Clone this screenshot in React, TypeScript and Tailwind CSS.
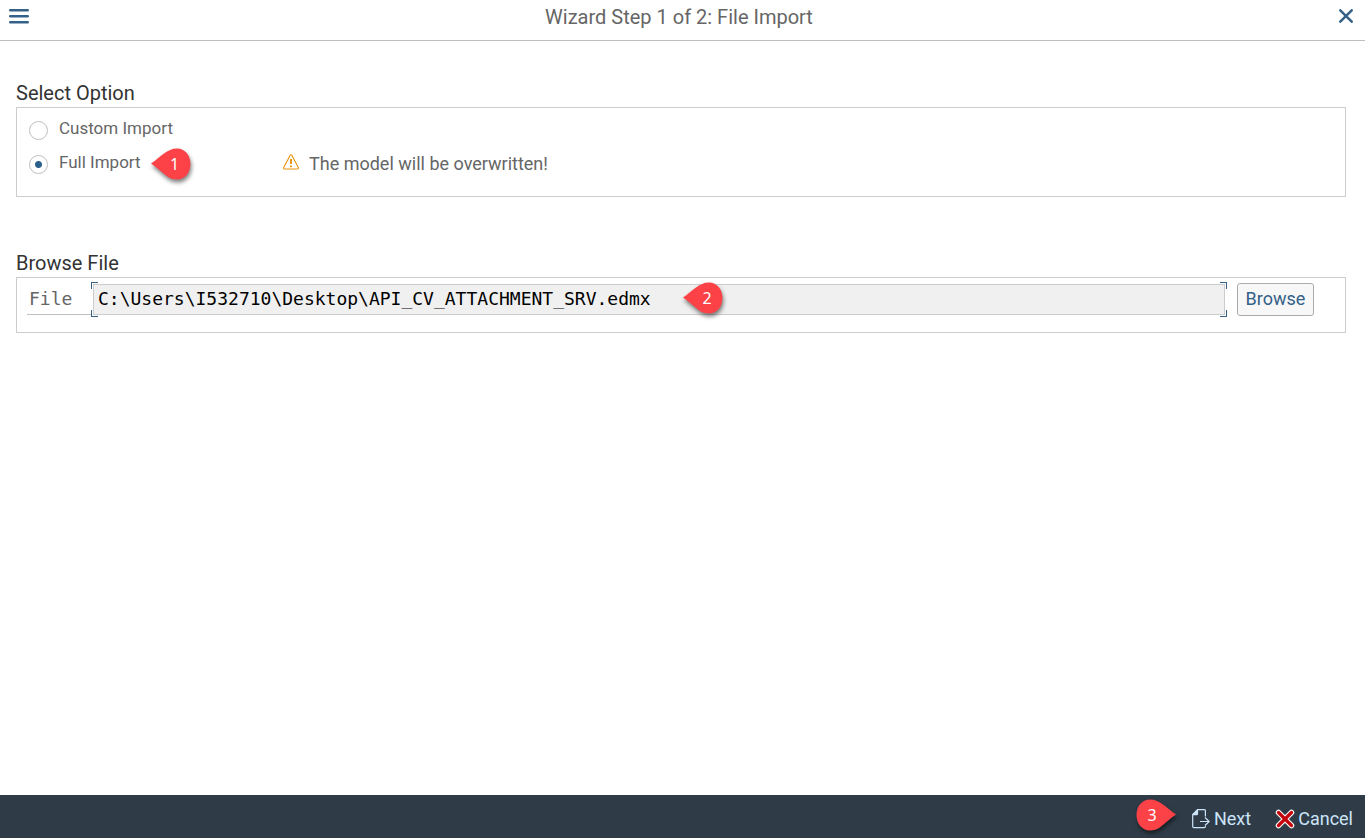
import { useState } from "react";

type MarkerProps = { label: string; direction?: "left" | "right"; className?: string };

function Marker({ label, direction = "left", className = "" }: MarkerProps) {
  const flipped = direction === "right";
  return (
    <span className={`inline-flex h-8 w-10 shrink-0 items-center ${className}`}>
      <svg
        viewBox="0 0 40 32"
        className="absolute inset-0 h-full w-full overflow-visible drop-shadow-[1px_3px_2px_rgba(0,0,0,0.5)]"
        aria-hidden="true"
      >
        <path
          fill="#fc4246"
          transform={flipped ? "matrix(-1 0 0 1 40 0)" : undefined}
          d="M0 15.5C5 12 9 8.500 13 5.500C17 2.500 21 .5 26 .5C34 .5 39.500 7.500 39.500 16C39.500 24.500 34 31.500 26 31.500C20 31.500 16 28.500 12.500 25.500C8.500 22 5 19 0 15.5Z"
        />
      </svg>
      <span
        className={`relative w-8 text-center font-['Noto_Sans',sans-serif] text-base text-white ${flipped ? "" : "ml-2"}`}
      >
        {label}
      </span>
    </span>
  );
}

function MenuIcon() {
  return (
    <svg viewBox="0 0 20 16" className="h-4 w-5" fill="none" stroke="#346187" strokeWidth="2.600" strokeLinecap="round" aria-hidden="true">
      <path d="M1.300 2.300h17.400M1.300 8.300h17.400M1.300 14.300h17.400" />
    </svg>
  );
}

function CloseIcon() {
  return (
    <svg viewBox="0 0 14 14" className="h-3.5 w-3.5" fill="none" stroke="#346187" strokeWidth="2.500" strokeLinecap="round" aria-hidden="true">
      <path d="M1.300 1.300L12.700 12.700M12.700 1.300L1.300 12.700" />
    </svg>
  );
}

function WarningIcon() {
  return (
    <svg viewBox="0 0 16 16" className="mb-1 h-4 w-4 shrink-0" fill="none" stroke="#e9930c" strokeLinejoin="round" aria-hidden="true">
      <path strokeWidth="1.1" d="M7.200 1.200Q8 .2 8.800 1.200L15.300 13.500Q15.800 15 14.600 15H1.400Q.2 15 .7 13.500Z" />
      <path strokeWidth="1.900" d="M8 5v5M8 11.500v1.700" />
    </svg>
  );
}

function NextIcon() {
  return (
    <svg viewBox="0 0 18 20" className="h-5 w-[18px]" fill="none" stroke="#cce4f8" strokeWidth="1.200" aria-hidden="true">
      <path d="M13.400 7.500V1.600Q13.400 .7 12.500 .7H5.500L.7 5.600V17.500Q.7 18.700 1.900 18.700H12.200Q13.400 18.700 13.400 17.500V17" />
      <path d="M5.500 .7V4.700Q5.500 5.600 4.600 5.600H.7" />
      <path d="M8 12.500H17M13 8.500L17.200 12.500L13 16.500" />
      <path fill="#cce4f8" stroke="none" d="M5 1V5H1Z" />
    </svg>
  );
}

function CancelIcon() {
  return (
    <svg viewBox="0 0 20 20" className="h-5 w-5" fill="none" strokeLinecap="round" aria-hidden="true">
      <path stroke="#ffffff" strokeWidth="5.500" d="M3.500 3.500L16.500 16.500M16.500 3.500L3.500 16.500" />
      <path stroke="#c5050c" strokeWidth="3.300" d="M3.500 3.500L16.500 16.500M16.500 3.500L3.500 16.500" />
    </svg>
  );
}

const radioClass =
  "h-[19px] w-[19px] shrink-0 appearance-none rounded-full border border-[#bfbfbf] bg-white checked:bg-[radial-gradient(circle,#2b5f8c_0_3px,white_4px)]";

export default function App() {
  const [mode, setMode] = useState("full");
  const [file, setFile] = useState("C:\\Users\\I532710\\Desktop\\API_CV_ATTACHMENT_SRV.edmx");

  return (
    <div className="flex min-h-screen flex-col bg-white font-[Roboto,sans-serif] text-[#666666]">
      <header className="flex h-[41px] items-start border-b border-[#bfbfbf] pr-3 pl-[9px]">
        <button type="button" aria-label="Menu" className="flex h-8 items-center">
          <MenuIcon />
        </button>
        <h1 className="flex-1 pr-2.5 text-center text-xl leading-[34px]">Wizard Step 1 of 2: File Import</h1>
        <button type="button" aria-label="Close" className="flex h-8 items-center">
          <CloseIcon />
        </button>
      </header>

      <main className="flex-1 pt-[38px] pr-[19px] pl-4">
        <section>
          <h2 className="text-xl leading-7 text-[#333333]">Select Option</h2>
          <div className="h-[90px] border border-[#cccccc] pt-[5px] pl-3">
            <label className="flex h-[34px] w-fit items-center gap-[11px] text-[17px]">
              <input type="radio" name="mode" className={radioClass} checked={mode === "custom"} onChange={() => setMode("custom")} />
              <span className="pb-0.5">Custom Import</span>
            </label>
            <div className="flex h-[34px] items-center">
              <div className="flex w-[254px] items-center gap-2.5">
                <label className="flex items-center gap-[11px] text-[17px]">
                  <input type="radio" name="mode" className={radioClass} checked={mode === "full"} onChange={() => setMode("full")} />
                  <span className="pb-0.5">Full Import</span>
                </label>
                <Marker label="1" className="relative" />
              </div>
              <p className="flex items-center gap-2.5 text-lg">
                <WarningIcon />
                The model will be overwritten!
              </p>
            </div>
          </div>
        </section>

        <section className="pt-[52px]">
          <h2 className="text-xl leading-7 text-[#333333]">Browse File</h2>
          <div className="flex h-14 items-start border border-[#cccccc] pt-1 pr-[31px] pl-2.5">
            <label htmlFor="file" className="mt-0.5 h-[31px] w-16 border-b border-[#bfbfbf] pl-0.5 font-['DejaVu_Sans_Mono',monospace] text-lg leading-[30px]">
              File
            </label>
            <div className="relative h-[35px] flex-1 p-0.5">
              <span className="absolute top-0 left-0 h-[7px] w-[7px] border-t border-l border-[#346187]" />
              <span className="absolute top-0 right-0 h-[7px] w-[7px] border-t border-r border-[#346187]" />
              <span className="absolute bottom-0 left-0 h-[7px] w-[7px] border-b border-l border-[#346187]" />
              <span className="absolute right-0 bottom-0 h-[7px] w-[7px] border-r border-b border-[#346187]" />
              <input
                id="file"
                type="text"
                value={file}
                onChange={(e) => setFile(e.target.value)}
                className="h-[31px] w-full border border-[#cccccc] bg-[#f0f0f0] px-1 pb-0.5 font-['DejaVu_Sans_Mono',monospace] text-lg text-black outline-none"
              />
              <Marker label="2" className="absolute top-0 left-[592px]" />
            </div>
            <button type="button" className="ml-2.5 mt-px h-[33px] w-[77px] rounded-[3px] border border-[#ababab] bg-[#f7f7f7] pb-0.5 text-lg text-[#346187]">
              Browse
            </button>
          </div>
        </section>
      </main>

      <footer className="flex h-[43px] items-center justify-end bg-[#2f3c48] pr-3 text-lg text-[#cce4f8]">
        <Marker label="3" direction="right" className="relative mr-4 mb-1" />
        <button type="button" className="mt-1 mr-6 flex items-center gap-1">
          <NextIcon />
          Next
        </button>
        <button type="button" className="mt-1 flex items-center gap-[3px]">
          <CancelIcon />
          Cancel
        </button>
      </footer>
    </div>
  );
}
